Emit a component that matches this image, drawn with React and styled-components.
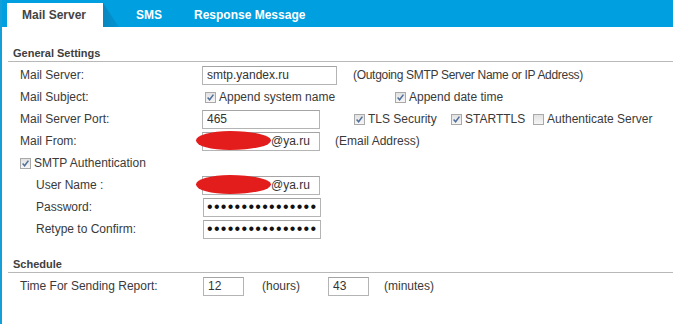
import React from 'react';
import styled, { createGlobalStyle } from 'styled-components';

const GlobalStyle = createGlobalStyle`
  html, body {
    margin: 0;
    padding: 0;
    background: #fff;
  }
  body {
    font-family: "Liberation Sans", Arial, sans-serif;
    color: #3a3a3a;
  }
`;

const Page = styled.div`
  width: 673px;
  height: 324px;
  box-sizing: border-box;
  border-left: 2px solid #159fd8;
  overflow: hidden;
`;

const TabBar = styled.div`
  height: 27px;
  background: #009fdf;
  display: flex;
  align-items: flex-end;
  padding-left: 5px;
`;

const Tab = styled.div`
  position: relative;
  height: 24px;
  box-sizing: border-box;
  display: flex;
  align-items: center;
  font-size: 12px;
  font-weight: 700;
  padding: 0 ${p => (p.$active ? '15px' : '0')};
  margin-right: ${p => p.$gap || 0}px;
  width: ${p => (p.$active ? '96px' : 'auto')};
  background: ${p => (p.$active ? '#fff' : 'transparent')};
  color: ${p => (p.$active ? '#444' : '#fff')};

  ${p => p.$active && `
    &::after {
      content: '';
      position: absolute;
      left: 100%;
      top: 0;
      width: 16px;
      height: 24px;
      background: linear-gradient(90deg, #0a86c0, #0095d3);
      clip-path: polygon(0 0, 100% 100%, 0 100%);
    }
  `}
`;

const Section = styled.div`
  margin-top: ${p => p.$top}px;
`;

const SectionTitle = styled.div`
  margin-left: 6px;
  padding: 0 0 1px 5px;
  height: 14px;
  line-height: 14px;
  font-size: 11px;
  font-weight: 700;
  color: #404040;
  border-bottom: 1px solid #b8b8b8;
`;

const Rows = styled.div`
  margin-top: 2px;
`;

const Row = styled.div`
  height: 22px;
  display: flex;
  align-items: center;
  font-size: 12px;
`;

const Label = styled.div`
  width: ${p => 182 - (p.$indent ? 16 : 0)}px;
  padding-left: ${p => 18 + (p.$indent ? 16 : 0)}px;
  flex: none;
  white-space: nowrap;
`;

const FieldWrap = styled.div`
  position: relative;
  display: flex;
`;

const Input = styled.input`
  width: ${p => p.$w || 118}px;
  height: 19px;
  box-sizing: border-box;
  border: 1px solid #b4b4b4;
  border-top-color: #a4a4a4;
  padding: 0 4px;
  text-indent: ${p => p.$indent || 0}px;
  font-family: "Liberation Sans", Arial, sans-serif;
  font-size: 12px;
  color: #333;
  background: #fff;
  outline: none;
  margin-left: ${p => p.$ml || 0}px;

  &[type='password'] {
    font-size: 16px;
    letter-spacing: 1.3px;
    padding: 0 3px;
    color: #111;
  }
`;

const Redact = styled.div`
  position: absolute;
  left: -6px;
  top: -1px;
  width: 75px;
  height: 19px;
  background: #e31c1c;
  border-radius: 45% 55% 55% 45% / 50%;
`;

const Hint = styled.span`
  margin-left: ${p => p.$ml}px;
  letter-spacing: ${p => p.$tight ? '-0.3px' : 'normal'};
  white-space: nowrap;
`;

const Check = styled.label`
  display: flex;
  align-items: center;
  flex: none;
  width: ${p => (p.$w ? `${p.$w}px` : 'auto')};
  margin-left: ${p => p.$ml || 0}px;
  white-space: nowrap;
  gap: 3px;
`;

const Box = styled.span`
  width: 11px;
  height: 11px;
  flex: none;
  box-sizing: border-box;
  border: 1px solid #a9a9a9;
  background: linear-gradient(180deg, #e2e2e2, #f6f6f6);
  display: inline-flex;
  align-items: center;
  justify-content: center;
`;

function Checkbox({ checked, label, ml, w }) {
  return (
    <Check $ml={ml} $w={w}>
      <Box>
        {checked && (
          <svg width="9" height="9" viewBox="0 0 9 9">
            <path d="M1.6 4.6 L3.6 6.8 L7.4 1.6" fill="none" stroke="#4f6f9a" strokeWidth="1.5" />
          </svg>
        )}
      </Box>
      {label}
    </Check>
  );
}

export default function App() {
  return (
    <Page>
      <GlobalStyle />
      <TabBar>
        <Tab $active $gap={33}>Mail Server</Tab>
        <Tab $gap={32}>SMS</Tab>
        <Tab>Response Message</Tab>
      </TabBar>

      <Section $top={19}>
        <SectionTitle>General Settings</SectionTitle>
        <Rows>
          <Row>
            <Label>Mail Server:</Label>
            <Input $w={135} defaultValue="smtp.yandex.ru" />
            <Hint $ml={16} $tight>(Outgoing SMTP Server Name or IP Address)</Hint>
          </Row>
          <Row>
            <Label>Mail Subject:</Label>
            <Checkbox checked ml={3} w={190} label="Append system name" />
            <Checkbox checked label="Append date time" />
          </Row>
          <Row>
            <Label>Mail Server Port:</Label>
            <Input defaultValue="465" />
            <Checkbox checked ml={34} w={97} label="TLS Security" />
            <Checkbox checked w={82} label="STARTTLS" />
            <Checkbox label="Authenticate Server" />
          </Row>
          <Row>
            <Label>Mail From:</Label>
            <FieldWrap>
              <Input $indent={64} defaultValue="@ya.ru" />
              <Redact />
            </FieldWrap>
            <Hint $ml={15}>(Email Address)</Hint>
          </Row>
          <Row>
            <Checkbox checked ml={18} label="SMTP Authentication" />
          </Row>
          <Row>
            <Label $indent>User Name :</Label>
            <FieldWrap>
              <Input $indent={64} defaultValue="@ya.ru" />
              <Redact />
            </FieldWrap>
          </Row>
          <Row>
            <Label $indent>Password:</Label>
            <Input type="password" defaultValue="xxxxxxxxxxxxxxxx" $ml={1} />
          </Row>
          <Row>
            <Label $indent>Retype to Confirm:</Label>
            <Input type="password" defaultValue="xxxxxxxxxxxxxxxx" $ml={1} />
          </Row>
        </Rows>
      </Section>

      <Section $top={17}>
        <SectionTitle>Schedule</SectionTitle>
        <Rows>
          <Row>
            <Label>Time For Sending Report:</Label>
            <Input $w={41} $ml={1} defaultValue="12" />
            <Hint $ml={18}>(hours)</Hint>
            <Input $w={41} $ml={28} defaultValue="43" />
            <Hint $ml={15}>(minutes)</Hint>
          </Row>
        </Rows>
      </Section>
    </Page>
  );
}
